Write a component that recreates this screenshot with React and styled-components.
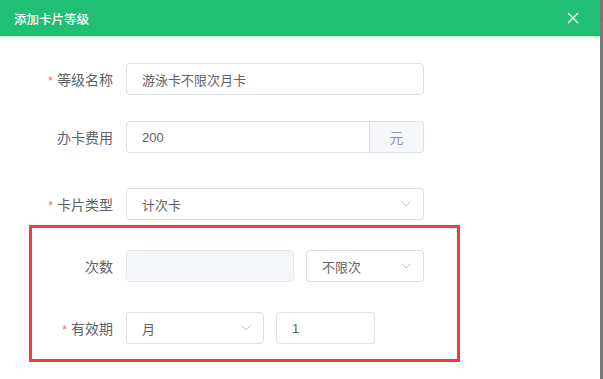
import React from 'react';
import styled, { createGlobalStyle } from 'styled-components';

const GlobalStyle = createGlobalStyle`
  html, body {
    margin: 0;
    padding: 0;
    background: #fff;
    overflow: hidden;
  }
  body {
    font-family: "Liberation Sans", "Noto Sans CJK SC", sans-serif;
  }
`;

const Page = styled.div`
  display: flex;
  width: 603px;
  height: 379px;
  overflow: hidden;
`;

const Dialog = styled.div`
  width: 600px;
  height: 379px;
  background: #fff;
  display: flex;
  flex-direction: column;
`;

const Strip = styled.div`
  width: 3px;
  height: 379px;
  background: #7b7b7b;
  border-top: 22px solid #767676;
  box-sizing: border-box;
`;

const Header = styled.div`
  height: 36px;
  background: #20bf74;
  border-bottom: 1px solid #bfeed6;
  display: flex;
  align-items: center;
  justify-content: space-between;
  padding: 0 21px 0 14px;
`;

const Title = styled.span`
  color: #fff;
  font-size: 12.5px;
  font-weight: 500;
`;

const Close = styled.svg`
  width: 12px;
  height: 12px;
  display: block;
`;

const Body = styled.div`
  padding-top: 26px;
`;

const FormItem = styled.div`
  display: flex;
  align-items: center;
  height: 32px;
  margin-bottom: ${p => p.gap || 0}px;
`;

const Label = styled.label`
  width: ${p => p.width}px;
  box-sizing: border-box;
  padding-right: 13px;
  text-align: right;
  font-size: 14px;
  color: #606266;
  flex-shrink: 0;
`;

const Star = styled.span`
  color: #f56c6c;
  margin-right: 4px;
  font-size: 12px;
`;

const Control = styled.div`
  display: flex;
  gap: ${p => p.gap || 0}px;
  width: ${p => p.width}px;
`;

const Input = styled.div`
  position: relative;
  box-sizing: border-box;
  height: 32px;
  width: ${p => p.width ? p.width + 'px' : 'auto'};
  flex: ${p => p.width ? '0 0 auto' : '1'};
  border: 1px solid ${p => p.disabled ? '#e4e7ed' : '#dcdfe6'};
  background: ${p => p.disabled ? '#f5f7fa' : '#fff'};
  border-radius: ${p => p.append ? '4px 0 0 4px' : '4px'};
  padding: 0 15px;
  display: flex;
  align-items: center;
  font-size: 13px;
  color: #606266;
`;

const Append = styled.div`
  box-sizing: border-box;
  height: 32px;
  width: 54px;
  border: 1px solid #dcdfe6;
  border-left: none;
  border-radius: 0 4px 4px 0;
  background: #f5f7fa;
  color: #909399;
  font-size: 14px;
  display: flex;
  align-items: center;
  justify-content: center;
`;

const Arrow = styled.svg`
  position: absolute;
  right: 12px;
  top: 50%;
  margin-top: -3px;
  width: 10px;
  height: 6px;
`;

const Highlight = styled.div`
  margin-left: 29px;
  width: 431px;
  box-sizing: border-box;
  border: 3px solid #f03c3c;
  padding: 22px 0 15px;
`;

function Chevron() {
  return (
    <Arrow viewBox="0 0 10 6">
      <path d="M0.5 0.5 L5 5 L9.5 0.5" fill="none" stroke="#c0c4cc" strokeWidth="1" />
    </Arrow>
  );
}

function Select({ value, width }) {
  return (
    <Input width={width}>
      {value}
      <Chevron />
    </Input>
  );
}

export default function App() {
  return (
    <>
      <GlobalStyle />
      <Page>
        <Dialog>
          <Header>
            <Title>添加卡片等级</Title>
            <Close viewBox="0 0 12 12">
              <path d="M1 1 L11 11 M11 1 L1 11" stroke="#fff" strokeWidth="1.4" fill="none" />
            </Close>
          </Header>
          <Body>
            <FormItem gap={26}>
              <Label width={126}><Star>*</Star>等级名称</Label>
              <Control width={298}>
                <Input>游泳卡不限次月卡</Input>
              </Control>
            </FormItem>
            <FormItem gap={35}>
              <Label width={126}>办卡费用</Label>
              <Control width={298}>
                <Input append>200</Input>
                <Append>元</Append>
              </Control>
            </FormItem>
            <FormItem gap={5}>
              <Label width={126}><Star>*</Star>卡片类型</Label>
              <Control width={298}>
                <Select value="计次卡" />
              </Control>
            </FormItem>
            <Highlight>
              <FormItem gap={30}>
                <Label width={94}>次数</Label>
                <Control width={298} gap={12}>
                  <Input disabled width={168} />
                  <Select value="不限次" />
                </Control>
              </FormItem>
              <FormItem>
                <Label width={94}><Star>*</Star>有效期</Label>
                <Control width={298} gap={12}>
                  <Select value="月" width={138} />
                  <Input width={99}>1</Input>
                </Control>
              </FormItem>
            </Highlight>
          </Body>
        </Dialog>
        <Strip />
      </Page>
    </>
  );
}
